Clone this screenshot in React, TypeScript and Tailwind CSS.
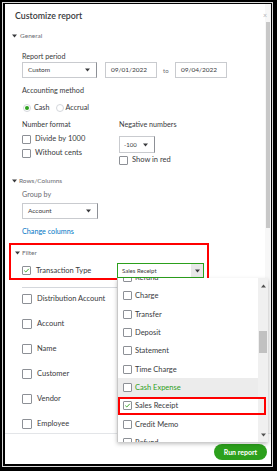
import React from "react";

const font = "font-['Lato','Open_Sans',sans-serif]";

function Tri({ className = "" }: { className?: string }) {
  return (
    <svg width="5" height="4" viewBox="0 0 5 4" className={className}>
      <path d="M0 0.5 L5 0.5 L2.5 3.5 Z" fill="#393a3d" />
    </svg>
  );
}

function Box({ checked = false }: { checked?: boolean }) {
  return (
    <div className="w-[9px] h-[9px] border border-[#8d9096] rounded-[1px] bg-white flex items-center justify-center shrink-0">
      {checked && (
        <svg width="7" height="7" viewBox="0 0 7 7">
          <path d="M1.3 3.6 L2.8 5 L5.8 1.8" stroke="#2ca01c" strokeWidth="0.9" fill="none" />
        </svg>
      )}
    </div>
  );
}

function SelectBox({ text, w, arrowRight = 6 }: { text: string; w: string; arrowRight?: number }) {
  return (
    <div className={`${w} h-[16px] border border-[#c9cbcf] border-r-[#8d9096] bg-white flex items-center justify-between pl-[5px]`} style={{ paddingRight: arrowRight }}>
      <span className="text-[6.5px] text-[#393a3d]">{text}</span>
      <Tri />
    </div>
  );
}

export default function App() {
  const filters = ["Distribution Account", "Account", "Name", "Customer", "Vendor", "Employee"];
  const items = [
    "Refund",
    "Charge",
    "Transfer",
    "Deposit",
    "Statement",
    "Time Charge",
    "Cash Expense",
    "Sales Receipt",
    "Credit Memo",
    "Refund",
  ];
  return (
    <div className={`${font} w-[277px] h-[471px] bg-black pl-[2px] pt-[2px] pr-[4px] pb-[4px]`}>
      <div className="h-full border border-[#d9d9d9]">
        <div className="h-full border-l-2 border-t border-r border-b-2 border-black bg-white flex flex-col overflow-hidden">
          {/* body */}
          <div className="flex h-[429px] shrink-0">
            <div className="flex-1 flex flex-col relative">
              {/* title */}
              <div className="mt-[6px] h-[12px] flex items-center justify-between pl-[10px]">
                <span className="text-[8.8px] font-semibold text-[#393a3d] leading-none">Customize report</span>
                <span className="text-[7px] text-[#b0b2b6] leading-none mr-[-2px] mt-[-2px]">×</span>
              </div>
              {/* General */}
              <div className="mt-[9px] h-[10px] flex items-center pl-[7px] gap-[3px]">
                <Tri />
                <span className="text-[6.5px] text-[#6b6c72]">General</span>
              </div>
              <div className="pl-[17px] flex flex-col">
                <div className="mt-[11px] h-[10px] flex items-center text-[7.2px] text-[#393a3d]">Report period</div>
                <div className="flex items-center h-[16px]">
                  <SelectBox text="Custom" w="w-[75px]" />
                  <div className="ml-[8px] w-[52px] h-[16px] border border-[#c9cbcf] flex items-center pl-[5px] text-[6.5px] text-[#393a3d]">09/01/2022</div>
                  <span className="ml-[6px] w-[12px] text-[6px] text-[#6b6c72]">to</span>
                  <div className="w-[52px] h-[16px] border border-[#c9cbcf] flex items-center pl-[5px] text-[6.5px] text-[#393a3d]">09/04/2022</div>
                </div>
                <div className="mt-[8px] h-[10px] flex items-center text-[7.2px] text-[#393a3d]">Accounting method</div>
                <div className="mt-[7px] h-[10px] flex items-center text-[7.2px] text-[#393a3d]">
                  <div className="w-[8px] h-[8px] rounded-full border border-[#d4d7dc] flex items-center justify-center ml-[1px]">
                    <div className="w-[4px] h-[4px] rounded-full bg-[#2ca01c]" />
                  </div>
                  <span className="ml-[3px]">Cash</span>
                  <div className="w-[8px] h-[8px] rounded-full border border-[#d4d7dc] ml-[6px]" />
                  <span className="ml-[2px]">Accrual</span>
                </div>
                <div className="flex">
                  <div className="w-[97px] flex flex-col">
                    <div className="mt-[7px] h-[10px] flex items-center text-[7.2px] text-[#393a3d]">Number format</div>
                    <div className="mt-[4px] h-[10px] flex items-center gap-[4px] text-[7.5px] text-[#393a3d]">
                      <Box />
                      <span>Divide by 1000</span>
                    </div>
                    <div className="mt-[4px] h-[10px] flex items-center gap-[4px] text-[7.5px] text-[#393a3d]">
                      <Box />
                      <span>Without cents</span>
                    </div>
                  </div>
                  <div className="flex flex-col">
                    <div className="mt-[7px] h-[10px] flex items-center text-[7.2px] text-[#393a3d]">Negative numbers</div>
                    <div className="mt-[6px]">
                      <div className="w-[36px] h-[17px] border border-[#c9cbcf] border-r-[#8d9096] flex items-center justify-between pl-[4px] pr-[6px]">
                        <span className="text-[6px] text-[#393a3d]">-100</span>
                        <Tri />
                      </div>
                    </div>
                    <div className="mt-[2px] h-[10px] flex items-center gap-[4px] text-[7.5px] text-[#393a3d]">
                      <Box />
                      <span>Show in red</span>
                    </div>
                  </div>
                </div>
              </div>
              {/* Rows/Columns */}
              <div className="mt-[11px] h-[10px] flex items-center pl-[7px] gap-[2px]">
                <Tri />
                <span className="text-[6.5px] text-[#6b6c72]">Rows/Columns</span>
              </div>
              <div className="pl-[17px] flex flex-col">
                <div className="mt-[4px] h-[10px] flex items-center text-[7.2px] text-[#6b6c72]">Group by</div>
                <div className="mt-[3px]">
                  <SelectBox text="Account" w="w-[76px]" />
                </div>
                <div className="mt-[8px] h-[10px] flex items-center text-[7.2px] text-[#0077c5]">Change columns</div>
              </div>
              {/* Filter (annotated) */}
              <div className="mt-[6px] ml-[4px] w-[200px] border-2 border-[#ff0000] pt-[3px] flex flex-col relative z-10">
                <div className="h-[10px] flex items-center pl-[4px] gap-[2px]">
                  <Tri />
                  <span className="text-[6.5px] text-[#6b6c72]">Filter</span>
                </div>
                <div className="mt-[5px] flex items-center pl-[11px]">
                  <div className="w-[95px] flex items-center gap-[5px] text-[7.5px] text-[#393a3d]">
                    <Box checked />
                    <span>Transaction Type</span>
                  </div>
                  <div className="relative">
                    <div className="w-[87px] h-[15px] border border-[#2ca01c] flex items-center justify-between pl-[4px] bg-white">
                      <span className="text-[6px] text-[#393a3d]">Sales Receipt</span>
                      <div className="w-[12px] h-full bg-[#e8e8e8] flex items-center justify-center">
                        <Tri />
                      </div>
                    </div>
                    {/* dropdown */}
                    <div className="absolute left-0 top-[15px] w-[151px] h-[164px] bg-white border-l border-[#c8c8c8] shadow-[0_2px_4px_rgba(0,0,0,0.25)] flex overflow-hidden z-20">
                      <div className="flex-1 flex flex-col overflow-hidden relative">
                        <div className="mt-[-9.5px] flex flex-col">
                          {items.map((it, i) => (
                            <div
                              key={i}
                              className={`h-[18.33px] shrink-0 flex items-center gap-[3px] pl-[5px] text-[7.5px] ${
                                it === "Cash Expense" ? "bg-[#ececec] text-[#2ca01c]" : "text-[#393a3d]"
                              }`}
                            >
                              <Box checked={it === "Sales Receipt"} />
                              <span>{it}</span>
                            </div>
                          ))}
                        </div>
                      </div>
                      <div className="w-[10px] bg-[#f0f0f0] flex flex-col items-center relative">
                        <svg width="5" height="4" viewBox="0 0 5 4" className="mt-[6px]">
                          <path d="M0 3.5 L5 3.5 L2.5 0.5 Z" fill="#505050" />
                        </svg>
                        <div className="mt-[43px] w-[8px] h-[22px] bg-[#c1c1c1]" />
                        <div className="flex-1" />
                        <svg width="5" height="4" viewBox="0 0 5 4" className="mb-[5px]">
                          <path d="M0 0.5 L5 0.5 L2.5 3.5 Z" fill="#505050" />
                        </svg>
                      </div>
                      {/* annotation on Sales Receipt */}
                      <div className="absolute left-0 top-[119px] w-[148px] h-[18px] border-2 border-[#ff0000]" />
                    </div>
                  </div>
                </div>
              </div>
              <div className="mt-[7px] ml-[17px] mr-[6px] h-px bg-[#d4d7dc]" />
              <div className="pl-[17px] flex flex-col">
                {filters.map((f, i) => (
                  <div key={f} className={`${i === 0 ? "mt-[6px]" : "mt-[15px]"} h-[10px] flex items-center gap-[5px] text-[7.5px] text-[#393a3d]`}>
                    <div className="w-[10px] h-[10px] border border-[#8d9096] rounded-[1px] bg-white" />
                    <span>{f}</span>
                  </div>
                ))}
              </div>
            </div>
            {/* main scrollbar */}
            <div className="w-[6px] bg-[#f7f7f7] flex flex-col items-center">
              <div className="mt-[18px] w-[4px] h-[206px] bg-[#c8c8c8]" />
            </div>
          </div>
          {/* footer */}
          <div className="border-t border-[#e3e5e8] flex-1 flex justify-end items-start pt-[10px] pr-[4px]">
            <div className="w-[53px] h-[16px] rounded-full bg-[#2ca01c] text-white text-[7px] font-bold flex items-center justify-center">
              Run report
            </div>
          </div>
        </div>
      </div>
    </div>
  );
}
